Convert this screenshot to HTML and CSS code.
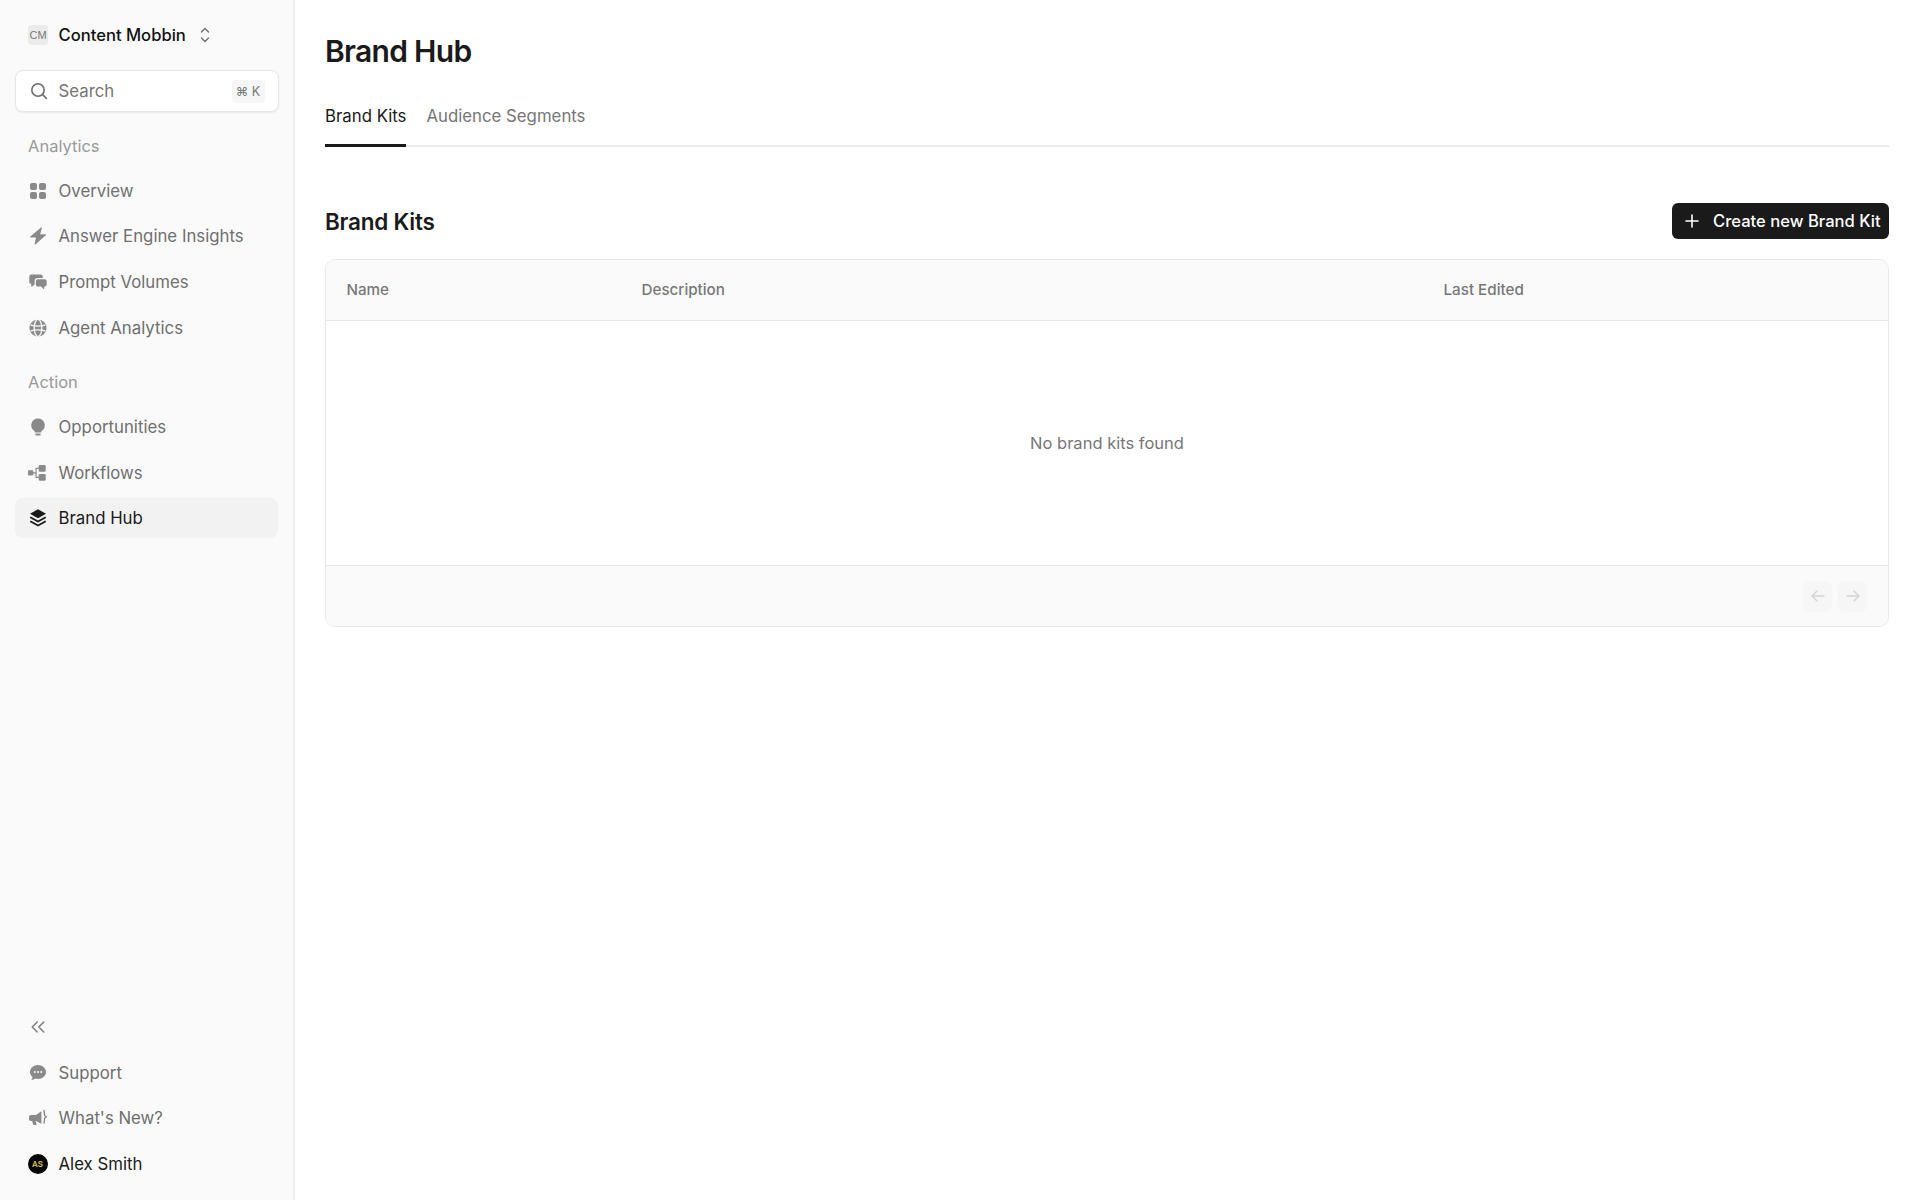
FILE: index.html
```html
<!DOCTYPE html>
<html lang="en">
<head>
<meta charset="utf-8">
<title>Brand Hub</title>
<link rel="stylesheet" href="styles.css">
</head>
<body>
<div class="app">
  <aside class="sidebar">
    <div class="switcher">
      <span class="org-badge">CM</span>
      <span class="org-name">Content Mobbin</span>
      <svg class="chev" viewBox="0 0 12 20" width="12" height="20" fill="none" stroke="#6f6f6f" stroke-width="1.4" stroke-linecap="round" stroke-linejoin="round"><path d="M2.5 7 6 3.5 9.5 7M2.5 13 6 16.500 9.5 13"/></svg>
    </div>
    <div class="search">
      <svg class="icon" viewBox="0 0 18 18" fill="none" stroke="#6f6f6f" stroke-width="1.6" stroke-linecap="round"><circle cx="8" cy="8" r="6.200"/><path d="M12.600 12.600 16.400 16.400"/></svg>
      <span class="search-label">Search</span>
      <kbd class="kbd">⌘ K</kbd>
    </div>

    <div class="section-label first">Analytics</div>
    <nav class="nav">
      <a class="item"><svg class="icon" viewBox="0 0 18 18" fill="#8a8a8a"><rect x="1" y="1" width="7" height="7" rx="2"/><rect x="10" y="1" width="7" height="7" rx="2"/><rect x="1" y="10" width="7" height="7" rx="2"/><rect x="10" y="10" width="7" height="7" rx="2"/></svg>Overview</a>
      <a class="item"><svg class="icon" viewBox="0 0 18 18" fill="#8a8a8a"><path d="M12 .4 1.400 9.500c-.4.4-.1 1.100.4 1.100H7L5.600 17c-.1.5.4.8.8.4L16.800 8.300c.4-.4.1-1-.4-1H11.200L12.900 1c.1-.6-.5-.9-.9-.6Z"/></svg>Answer Engine Insights</a>
      <a class="item"><svg class="icon" viewBox="0 0 18 18" fill="#8a8a8a"><path d="M2.200 1.500h9.600a2 2 0 0 1 2 2V5H8.800a3.200 3.200 0 0 0-3.200 3.200v3l-2.300 2.300c-.4.400-1.100.1-1.100-.4v-2.300A2 2 0 0 1 .3 8.900V3.500a2 2 0 0 1 1.900-2Z"/><path d="M8.800 6.300h6.900a2 2 0 0 1 2 2v3.300a2 2 0 0 1-2 2h-.4v1.700c0 .5-.6.800-1 .4l-2.200-2.100H8.800a2 2 0 0 1-2-2V8.300a2 2 0 0 1 2-2Z"/></svg>Prompt Volumes</a>
      <a class="item"><svg class="icon" viewBox="0 0 18 18"><circle cx="9" cy="9" r="8.600" fill="#8a8a8a"/><g fill="none" stroke="#fafafa" stroke-width="1.300"><ellipse cx="9" cy="9" rx="3.800" ry="8.600"/><path d="M1.500 5.800c4 1.800 11 1.800 15 0M1.500 12.200c4-1.800 11-1.800 15 0"/></g></svg>Agent Analytics</a>
    </nav>

    <div class="section-label">Action</div>
    <nav class="nav">
      <a class="item"><svg class="icon" viewBox="0 0 18 18" fill="#8a8a8a"><path d="M9 .4a6.800 6.800 0 0 0-4.200 12.100c.6.500 1 1.200 1.100 1.900h6.200c.1-.7.500-1.400 1.100-1.900A6.800 6.800 0 0 0 9 .4Z"/><rect x="6.300" y="15.600" width="5.400" height="1.800" rx=".9"/></svg>Opportunities</a>
      <a class="item"><svg class="icon" viewBox="0 0 18 18" fill="#8a8a8a"><rect x="-1" y="6.200" width="5.300" height="5.300" rx="1.200"/><rect x="9.700" y="1" width="7" height="6.700" rx="1.200"/><rect x="9.700" y="10" width="7" height="6.700" rx="1.200"/><path d="M4 8.200h2.500V3.800h3.400V5H7.700v7.700h2.200v1.200H6.500V9.400H4z"/></svg>Workflows</a>
      <a class="item active"><svg class="icon" viewBox="0 0 18 18" fill="#1a1a1a"><path d="M9 .2 17 4.700 9 9.200 1 4.700Z"/><path d="M1.700 7.500 9 11.600l7.300-4.100.9 1.500L9 13.600.8 9Z"/><path d="M1.700 11.400 9 15.500l7.300-4.100.9 1.500L9 17.500.8 12.900Z"/></svg>Brand Hub</a>
    </nav>

    <div class="spacer"></div>

    <button class="collapse" type="button" aria-label="Collapse"><svg class="icon" viewBox="0 0 18 18" fill="none" stroke="#7d7d7d" stroke-width="1.500" stroke-linecap="round" stroke-linejoin="round"><path d="M8.200 4 3.200 9l5 5M14.800 4 9.800 9l5 5"/></svg></button>
    <nav class="nav">
      <a class="item"><svg class="icon" viewBox="0 0 18 18"><path fill="#8a8a8a" d="M9 1C4.600 1 1 4.100 1 8c0 2 1 3.800 2.500 5-.1 1.200-.7 2.300-1.400 3 1.900 0 3.500-.6 4.600-1.400.7.200 1.500.4 2.300.4 4.400 0 8-3.100 8-7s-3.600-7-8-7Z"/><g fill="#fafafa"><circle cx="5.800" cy="8" r="1"/><circle cx="9" cy="8" r="1"/><circle cx="12.200" cy="8" r="1"/></g></svg>Support</a>
      <a class="item"><svg class="icon" viewBox="0 0 18 18"><path fill="#8a8a8a" d="M12.400 2.200v12.600L7 12H6.500l1 3c.1.500-.2 1-.8 1H5c-.4 0-.7-.2-.8-.6L3.100 12H1.800A1.800 1.800 0 0 1 0 10.200V7.800A1.800 1.800 0 0 1 1.800 6H7Z"/><path fill="none" stroke="#8a8a8a" stroke-width="1.400" stroke-linecap="round" d="M15 1.500c.5 1.500.2 3.300.7 4.900.2.700.9 1.100 1.500 1.400-.6.300-1.300.7-1.500 1.400-.5 1.600-.2 3.400-.7 4.900"/></svg>What's New?</a>
      <a class="item user"><span class="avatar">AS</span>Alex Smith</a>
    </nav>
  </aside>

  <main class="main">
    <h1 class="title">Brand Hub</h1>
    <div class="tabs">
      <a class="tab active">Brand Kits</a>
      <a class="tab">Audience Segments</a>
    </div>
    <div class="section-head">
      <h2 class="section-title">Brand Kits</h2>
      <button class="primary" type="button"><svg viewBox="0 0 14 14" width="14" height="14" fill="none" stroke="#fff" stroke-width="1.600" stroke-linecap="round"><path d="M7 1v12M1 7h12"/></svg>Create new Brand Kit</button>
    </div>
    <div class="table">
      <div class="thead">
        <span>Name</span>
        <span>Description</span>
        <span>Last Edited</span>
      </div>
      <div class="tbody">No brand kits found</div>
      <div class="tfoot">
        <span class="pager"><svg viewBox="0 0 16 16" width="16" height="16" fill="none" stroke="#d4d4d4" stroke-width="1.400" stroke-linecap="round" stroke-linejoin="round"><path d="M14 8H2M7 3 2 8l5 5"/></svg></span>
        <span class="pager"><svg viewBox="0 0 16 16" width="16" height="16" fill="none" stroke="#d4d4d4" stroke-width="1.400" stroke-linecap="round" stroke-linejoin="round"><path d="M2 8h12M9 3l5 5-5 5"/></svg></span>
      </div>
    </div>
  </main>
</div>
</body>
</html>
```
FILE: styles.css
```css
* { box-sizing: border-box; }
html, body { margin: 0; height: 100%; }
body { font-family: Inter, "Liberation Sans", sans-serif; color: #1a1a1a; background: #fff; }
.app { display: flex; height: 1200px; overflow: hidden; }

.sidebar {
  width: 295px; flex: none; background: #fafafa; border-right: 2px solid #efefef;
  display: flex; flex-direction: column; padding: 16px 15px 16px 14.500px;
}
.switcher { display: flex; align-items: center; height: 38px; padding-left: 13.500px; margin-bottom: 16px; }
.org-badge {
  width: 20px; height: 20px; border-radius: 4px; background: #ebebeb; color: #777;
  font-size: 11px; line-height: 20px; text-align: center; font-family: "Liberation Sans", sans-serif;
}
.org-name { margin-left: 10.500px; font-size: 16.600px; font-weight: 450; color: #111; }
.chev { margin-left: 13px; }
.search {
  height: 42px; width: 264px; display: flex; align-items: center; padding: 0 13px 0 14.500px; background: #fff;
  border: 1px solid #e6e6e6; border-radius: 8px; box-shadow: 0 1px 2px rgba(0,0,0,.07);
}
.search-label { margin-left: 10.500px; font-size: 16.800px; color: #767676; flex: 1; }
.kbd {
  font-family: Inter, "DejaVu Sans", sans-serif; font-size: 12.500px; color: #777; background: #f6f6f6; border-radius: 4px;
  height: 23px; line-height: 23px; width: 33px; text-align: center;
}
.icon { width: 18px; height: 18px; flex: none; overflow: visible; }
.section-label { margin: 23px 0 0 13.500px; height: 36.500px; font-size: 16.500px; line-height: 22px; color: #999; }
.section-label.first { margin-top: 23px; height: 35.500px; }
.nav { display: flex; flex-direction: column; gap: 5.700px; }
.item {
  height: 40px; display: flex; align-items: center; gap: 12px; padding-left: 14px; border-radius: 8px;
  font-size: 16.800px; font-weight: 400; color: #6f6f6f;
}
.item.active { background: #f2f2f2; color: #1a1a1a; }
.item.user { color: #1a1a1a; }
.avatar {
  width: 20px; height: 20px; margin: 0 -1px; border-radius: 50%; background: #050505; color: #d8c64a; flex: none;
  font-size: 8px; font-weight: 600; line-height: 20px; text-align: center;
}
.spacer { flex: 1; }
.collapse {
  height: 40px; border: 0; background: none; padding: 0 0 0 14px; display: flex; align-items: center; margin-bottom: 5.700px;
}

.main { flex: 1; min-width: 0; padding: 0 31px 0 30px; }
.title { margin: 32px 0 0; font-size: 30px; line-height: 38px; font-weight: 600; letter-spacing: -.7px; color: #1a1a1a; }
.tabs { display: flex; gap: 20px; margin-top: 24px; border-bottom: 2px solid #ebebeb; height: 53px; }
.tab { height: 53px; font-size: 16.800px; font-weight: 400; line-height: 44px; color: #767676; }
.tab.active { color: #1a1a1a; border-bottom: 3px solid #1a1a1a; }
.section-head { display: flex; justify-content: space-between; align-items: center; margin-top: 56px; height: 36px; }
.section-title { margin: 0; font-size: 22.500px; font-weight: 600; letter-spacing: -.25px; color: #1a1a1a; }
.primary {
  height: 36px; width: 217.500px; display: flex; align-items: center; gap: 14px; padding: 0 0 0 13.500px; border: 0; border-radius: 6px;
  background: #1a1a1a; color: #fff; font: 450 16.600px Inter, sans-serif; white-space: nowrap;
}
.table { margin-top: 20px; border: 1px solid #e8e8e8; border-radius: 10px; overflow: hidden; height: 368px; display: flex; flex-direction: column; }
.thead {
  height: 61px; display: grid; grid-template-columns: 295px 802px 1fr; align-items: center; padding: 0 0 1px 20.500px;
  background: #fafafa; border-bottom: 1px solid #e8e8e8; font-size: 15.200px; font-weight: 450; color: #777;
}
.tbody { flex: 1; display: flex; align-items: center; justify-content: center; font-size: 16.500px; color: #777; }
.tfoot {
  height: 61px; display: flex; justify-content: flex-end; align-items: center; gap: 6px; padding-right: 21px;
  background: #fafafa; border-top: 1px solid #e8e8e8;
}
.pager { width: 29px; height: 31px; border-radius: 7px; background: #f6f6f6; display: flex; align-items: center; justify-content: center; }
```
